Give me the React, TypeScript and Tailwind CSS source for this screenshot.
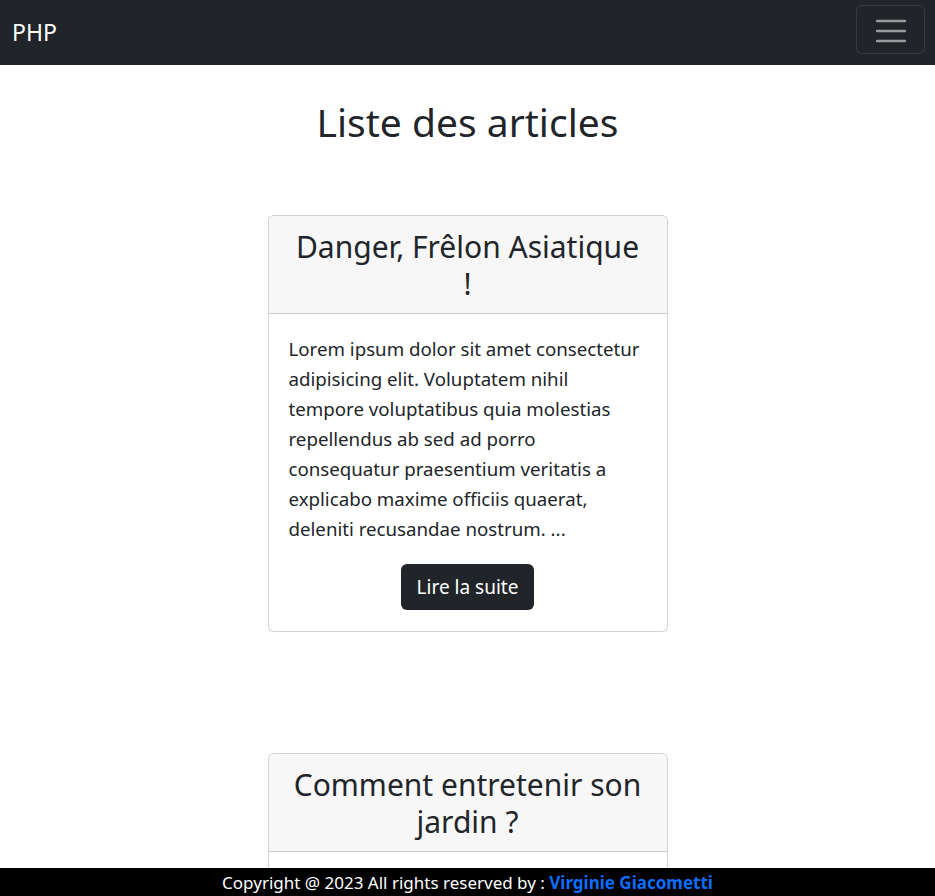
const articles = [
  {
    title: "Danger, Frêlon Asiatique !",
    body: "Lorem ipsum dolor sit amet consectetur adipisicing elit. Voluptatem nihil tempore voluptatibus quia molestias repellendus ab sed ad porro consequatur praesentium veritatis a explicabo maxime officiis quaerat, deleniti recusandae nostrum. ...",
  },
  {
    title: "Comment entretenir son jardin ?",
    body: "Lorem ipsum dolor sit amet consectetur adipisicing elit. Voluptatem nihil tempore voluptatibus quia molestias repellendus ab sed ad porro consequatur praesentium veritatis a explicabo maxime officiis quaerat, deleniti recusandae nostrum. ...",
  },
];

const Navbar = () => {
  return (
    <nav className="h-[65px] bg-[#212529] flex items-center justify-between pl-3 pr-[10px]">
      <a className="text-[23px] text-white">PHP</a>
      <button className="w-[69px] h-[49px] mb-[6px] rounded-[6px] border border-white/10 flex items-center justify-center">
        <svg width="30" height="30" viewBox="0 0 30 30">
          <path d="M1 6h28M1 16h28M1 26h28" stroke="rgba(255,255,255,0.55)" strokeWidth="2.5" strokeLinecap="round" />
        </svg>
      </button>
    </nav>
  );
};

const ArticleCard = ({ title, body }: { title: string; body: string }) => {
  return (
    <div className="w-[400px] rounded-[6px] border border-black/[0.175] bg-white overflow-hidden">
      <div className="bg-[#f7f7f7] border-b border-black/[0.175] px-[24px] pt-[12px] pb-[10px] text-center">
        <h2 className="text-[30px] leading-[1.25] text-[#212529]">{title}</h2>
      </div>
      <div className="px-5 pt-5 pb-[21px] flex flex-col items-center">
        <p className="text-[18.7px] leading-[30px] text-[#212529] mb-5">{body}</p>
        <button className="bg-[#212529] text-white text-[19px] leading-[28px] px-4 py-[9px] rounded-[6px]">Lire la suite</button>
      </div>
    </div>
  );
};

export default function App() {
  return (
    <div className="min-h-screen bg-white font-['Segoe_UI','Noto_Sans',sans-serif] pb-[200px]">
      <Navbar />
      <h1 className="text-center text-[39px] leading-[1.2] text-[#212529] mt-[34px] mb-[69px]">Liste des articles</h1>
      <div className="flex flex-col items-center gap-[121px]">
        {articles.map((a) => (
          <ArticleCard key={a.title} {...a} />
        ))}
      </div>
      <footer className="fixed bottom-0 left-0 right-0 h-[28px] bg-black text-white text-center text-[17px] leading-[30px]">
        Copyright @ 2023 All rights reserved by : <span className="font-bold text-[#0d6efd]">Virginie Giacometti</span>
      </footer>
    </div>
  );
}
